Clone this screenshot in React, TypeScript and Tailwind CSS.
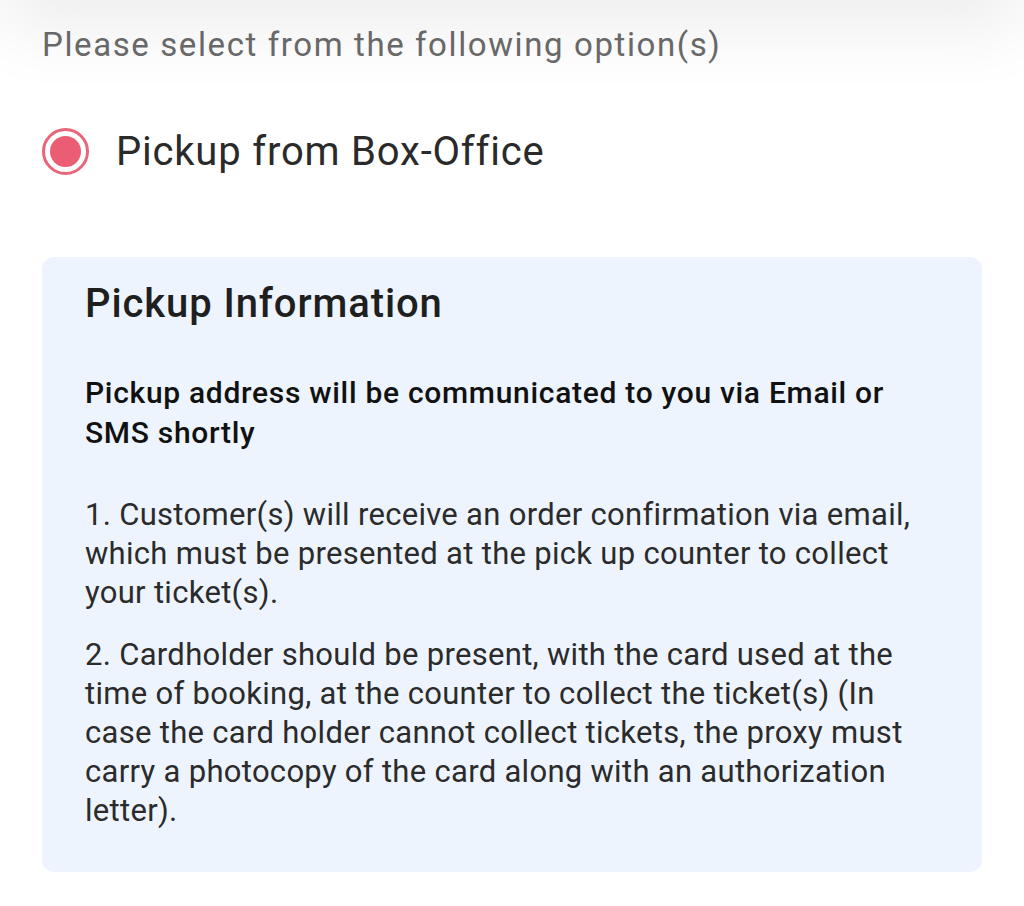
import React from "react";

export default function App() {
  return (
    <div
      className="relative min-h-[906px] w-[1024px] overflow-hidden bg-white"
      style={{ fontFamily: "Roboto, 'Noto Sans', sans-serif" }}
    >
      <div className="pointer-events-none absolute left-[30px] right-[30px] top-[-40px] h-[40px] shadow-[0_0_70px_30px_rgba(0,0,0,0.07)]" />
      <div className="px-[42px] pt-[25px]">
        <p className="text-[33px] leading-[40px] tracking-[1.6px] text-[#6b6b6b]">
          Please select from the following option(s)
        </p>
        <div className="mt-[63px] flex items-center">
          <div className="flex h-[47px] w-[47px] items-center justify-center rounded-full border-[3px] border-[#e9667a]">
            <div className="h-[31px] w-[31px] rounded-full bg-[#ea5d73]" />
          </div>
          <span className="ml-[27px] text-[40px] leading-[46px] tracking-[0.8px] text-[#2a2a2a]">
            Pickup from Box-Office
          </span>
        </div>
        <div className="mt-[82px] rounded-[12px] bg-[#edf4fe] px-[43px] pb-[42px] pt-[24px]">
          <h2 className="text-[40px] font-medium leading-[46px] tracking-[0.9px] text-[#1f1f1f]">
            Pickup Information
          </h2>
          <p className="mt-[46px] text-[30px] font-medium leading-[40px] tracking-[0.7px] text-[#111111]">
            Pickup address will be communicated to you via Email or SMS shortly
          </p>
          <p className="mt-[42px] text-[31px] leading-[39px] tracking-[0.3px] text-[#2b2b2b]">
            1. Customer(s) will receive an order confirmation via email, which
            must be presented at the pick up counter to collect your ticket(s).
          </p>
          <p className="mt-[23px] text-[31px] leading-[39px] tracking-[0.3px] text-[#2b2b2b]">
            2. Cardholder should be present, with the card used at the time of
            booking, at the counter to collect the ticket(s) (In case the card
            holder cannot collect tickets, the proxy must carry a photocopy of
            the card along with an authorization letter).
          </p>
        </div>
      </div>
    </div>
  );
}
